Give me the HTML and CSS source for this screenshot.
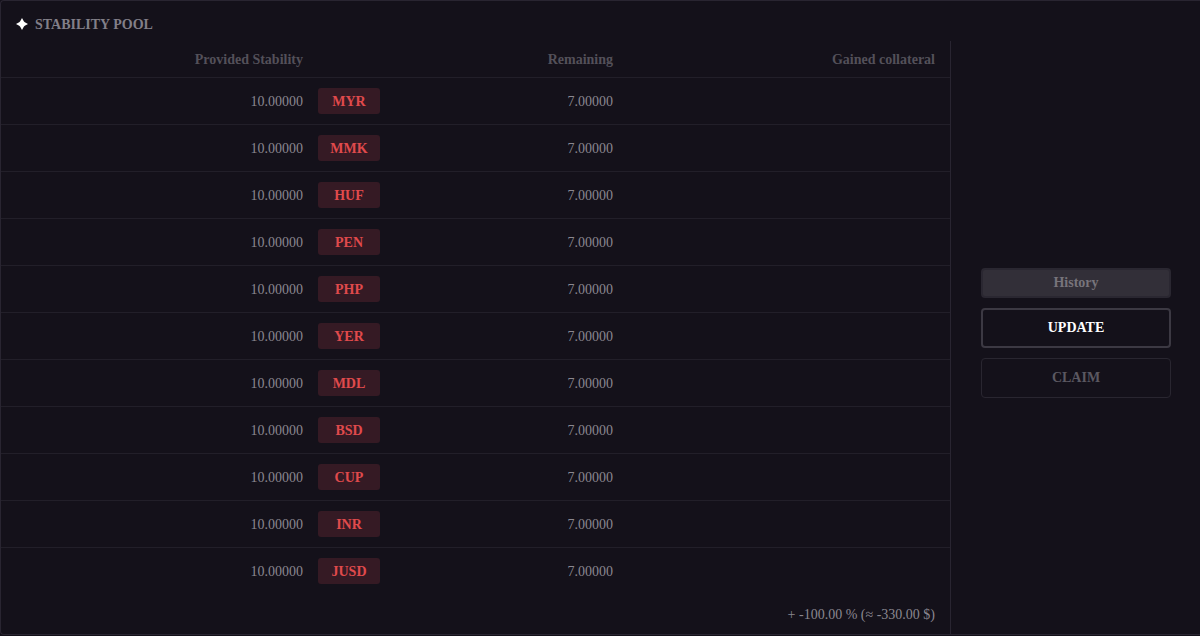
FILE: index.html
```
<!DOCTYPE html>
<html lang="en">
<head>
<meta charset="utf-8">
<title>Stability Pool</title>
<link rel="stylesheet" href="styles.css">
</head>
<body>
<main class="panel">
  <header class="panel-header">
    <svg class="star" viewBox="0 0 12 12" aria-hidden="true"><path d="M6 0 L7.8 3.2 Q8.2 3.8 8.8 4.2 L12 6 L8.8 7.8 Q8.2 8.2 7.8 8.8 L6 12 L4.2 8.8 Q3.8 8.2 3.2 7.8 L0 6 L3.2 4.2 Q3.8 3.8 4.2 3.2Z"/></svg>
    <h1 class="title">STABILITY POOL</h1>
  </header>
  <div class="panel-body">
    <section class="pool">
      <table class="pool-table">
        <colgroup><col class="col-provided"><col class="col-currency"><col class="col-remaining"><col></colgroup>
        <thead>
          <tr><th scope="col">Provided Stability</th><th colspan="2" scope="colgroup">Remaining</th><th scope="col">Gained collateral</th></tr>
        </thead>
        <tbody>
          <tr><td>10.00000</td><td class="currency"><span class="badge">MYR</span></td><td>7.00000</td><td></td></tr>
          <tr><td>10.00000</td><td class="currency"><span class="badge">MMK</span></td><td>7.00000</td><td></td></tr>
          <tr><td>10.00000</td><td class="currency"><span class="badge">HUF</span></td><td>7.00000</td><td></td></tr>
          <tr><td>10.00000</td><td class="currency"><span class="badge">PEN</span></td><td>7.00000</td><td></td></tr>
          <tr><td>10.00000</td><td class="currency"><span class="badge">PHP</span></td><td>7.00000</td><td></td></tr>
          <tr><td>10.00000</td><td class="currency"><span class="badge">YER</span></td><td>7.00000</td><td></td></tr>
          <tr><td>10.00000</td><td class="currency"><span class="badge">MDL</span></td><td>7.00000</td><td></td></tr>
          <tr><td>10.00000</td><td class="currency"><span class="badge">BSD</span></td><td>7.00000</td><td></td></tr>
          <tr><td>10.00000</td><td class="currency"><span class="badge">CUP</span></td><td>7.00000</td><td></td></tr>
          <tr><td>10.00000</td><td class="currency"><span class="badge">INR</span></td><td>7.00000</td><td></td></tr>
          <tr><td>10.00000</td><td class="currency"><span class="badge">JUSD</span></td><td>7.00000</td><td></td></tr>
        </tbody>
      </table>
      <p class="summary">+ -100.00 % (≈ -330.00 $)</p>
    </section>
    <aside class="actions">
      <button type="button" class="button history">History</button>
      <button type="button" class="button update">UPDATE</button>
      <button type="button" class="button claim" disabled>CLAIM</button>
    </aside>
  </div>
</main>
</body>
</html>
```
FILE: styles.css
```
* { box-sizing: border-box; }

body {
  margin: 0;
  background: #14111a;
  color: #8a8790;
  font: 14px/20px "Liberation Serif", "Times New Roman", serif;
}

.panel {
  border: 1px solid #292531;
  border-right: 0;
  border-radius: 4px 0 0 4px;
}

.panel-header {
  display: flex;
  align-items: center;
  gap: 7px;
  height: 40px;
  padding: 6px 15px 0;
}

.star { width: 12px; height: 12px; fill: #fff; }

.title { margin: 0; padding-top: 2px; font-size: 14px; line-height: 20px; color: #827f88; }

.panel-body { display: flex; }

.pool { flex: 1; border-right: 1px solid #292531; }

.pool-table {
  width: 100%;
  table-layout: fixed;
  border-spacing: 0;
}

.col-provided { width: 317px; }
.col-currency { width: 63px; }
.col-remaining { width: 247px; }

.pool-table th,
.pool-table td { padding: 2px 15px 0; text-align: right; }

.pool-table th { height: 36px; color: #535059; }

.pool-table td { height: 47px; border-top: 1px solid #221f29; }

.pool-table .currency { padding: 0; text-align: left; }

.badge {
  display: block;
  width: 62px;
  padding: 4px 0 2px;
  border-radius: 3px;
  background: #351a24;
  color: #e04a4c;
  font-weight: bold;
  text-align: center;
}

.summary { margin: 0; padding: 11px 15px 9px; text-align: right; }

.actions {
  display: flex;
  flex-direction: column;
  justify-content: center;
  gap: 10px;
  width: 249px;
  padding: 0 29px 10px 30px;
}

.button {
  height: 40px;
  padding: 0;
  border: 1px solid #292630;
  border-radius: 4px;
  background: transparent;
  color: #5b5861;
  font: bold 14px/20px "Liberation Serif", "Times New Roman", serif;
}

.history { height: 30px; border: 2px solid #2a2731; background: #322f38; color: #77747b; }

.update { border: 2px solid #3c3943; color: #fff; }
```
